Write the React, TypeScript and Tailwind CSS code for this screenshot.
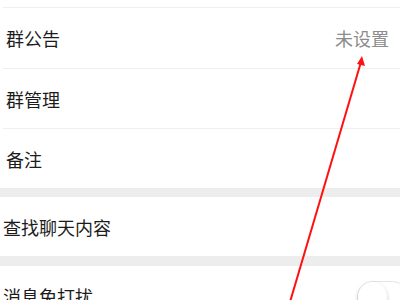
import React from "react";

const font = { fontFamily: '"Noto Sans CJK SC", "Noto Sans", sans-serif' };

function Row({ label, value, h, children }: { label: string; value?: string; h: string; children?: React.ReactNode }) {
  return (
    <div className={`flex items-center justify-between border-t border-[#efefef] pl-[3px] pr-[11px] ${h}`}>
      <span className="text-[18px] leading-none text-[#1c1c1c]">{label}</span>
      {value && <span className="text-[18px] leading-none text-[#8c8c8c]">{value}</span>}
      {children}
    </div>
  );
}

export default function App() {
  return (
    <div className="relative h-[300px] w-[400px] overflow-hidden bg-white" style={font}>
      <div className="h-[7px]" />
      <div className="ml-[3px]">
        <Row label="群公告" value="未设置" h="h-[61px]" />
        <Row label="群管理" h="h-[60px]" />
        <Row label="备注" h="h-[60px]" />
      </div>
      <div className="h-[9px] bg-[#ededed]" />
      <div className="flex h-[59px] items-center pl-[3px]">
        <span className="text-[18px] leading-none text-[#1c1c1c]">查找聊天内容</span>
      </div>
      <div className="h-[10px] bg-[#ededed]" />
      <div className="flex h-[60px] items-center pl-[3px]">
        <span className="text-[18px] leading-none text-[#1c1c1c]">消息免打扰</span>
        <div className="ml-auto mr-[-8px] flex h-[31px] w-[51px] shrink-0 items-center rounded-full border border-[#e4e4e4] bg-white">
          <div className="h-[29px] w-[29px] rounded-full bg-white shadow-[0_2px_4px_rgba(0,0,0,0.22)]" />
        </div>
      </div>

      <svg className="pointer-events-none absolute left-0 top-0" width="400" height="300" viewBox="0 0 400 300">
        <line x1="361" y1="62" x2="290" y2="302" stroke="#ff1010" strokeWidth="2" />
        <polygon points="362,56 365,66 357,64" fill="#ff1010" />
      </svg>
    </div>
  );
}
